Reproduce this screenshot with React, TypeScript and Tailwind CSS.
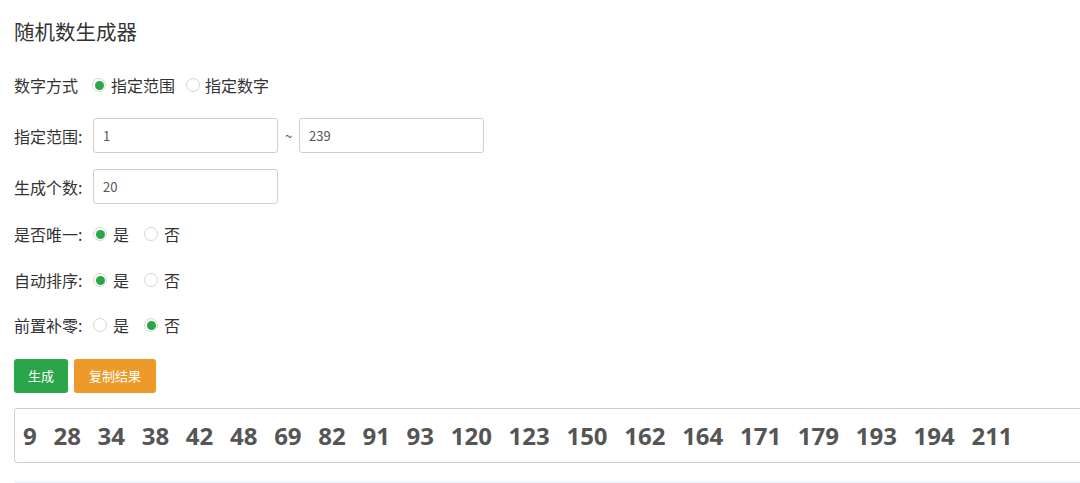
import React from 'react';

// Random number generator form

const CJK = { fontFamily: '"Microsoft YaHei", "Noto Sans CJK SC", "Noto Sans", sans-serif' };

const numbers = [9, 28, 34, 38, 42, 48, 69, 82, 91, 93, 120, 123, 150, 162, 164, 171, 179, 193, 194, 211];

function Radio({ checked, label, tight }: { checked?: boolean; label: string; tight?: boolean }) {
  return (
    <label className={tight ? 'flex items-center gap-[5px] mr-[11px]' : 'flex items-center gap-[6px] mr-[15px]'}>
      <span className="w-[14px] h-[14px] rounded-full border border-[#d6d6d6] bg-white flex items-center justify-center">
        {checked && <span className="w-[9px] h-[9px] rounded-full bg-[#2ba54a]" />}
      </span>
      <span>{label}</span>
    </label>
  );
}

function Field({ value }: { value: string }) {
  return (
    <div className="w-[185px] h-[35px] border border-[#cfcfcf] rounded-[3px] bg-white flex items-center px-[9px] text-[13px] text-[#555]">
      {value}
    </div>
  );
}

export default function App() {
  return (
    <div className="w-[1080px] h-[483px] bg-white overflow-hidden text-[#333] text-[16px]" style={CJK}>
      <div className="pl-[14px] pt-[19px]">
        <h1 className="text-[20.5px] leading-[24px] text-[#333] font-normal">随机数生成器</h1>

        <div className="flex items-center h-[24px] mt-[30px]">
          <span className="mr-[14px]">数字方式</span>
          <div className="flex items-center">
            <Radio tight checked label="指定范围" />
            <Radio tight label="指定数字" />
          </div>
        </div>

        <div className="flex items-center mt-[21px]">
          <span className="w-[79px]">指定范围:</span>
          <Field value="1" />
          <span className="w-[21px] text-center text-[13px] text-[#555]">~</span>
          <Field value="239" />
        </div>

        <div className="flex items-center mt-[16px]">
          <span className="w-[79px]">生成个数:</span>
          <Field value="20" />
        </div>

        <div className="flex items-center h-[24px] mt-[18px]">
          <span className="w-[79px]">是否唯一:</span>
          <Radio checked label="是" />
          <Radio label="否" />
        </div>

        <div className="flex items-center h-[24px] mt-[22px]">
          <span className="w-[79px]">自动排序:</span>
          <Radio checked label="是" />
          <Radio label="否" />
        </div>

        <div className="flex items-center h-[24px] mt-[21px]">
          <span className="w-[79px]">前置补零:</span>
          <Radio label="是" />
          <Radio checked label="否" />
        </div>

        <div className="flex items-center gap-[6px] mt-[22px]">
          <button className="h-[34px] w-[54px] rounded-[3px] bg-[#2ba54a] text-white text-[13px]">生成</button>
          <button className="h-[34px] w-[82px] rounded-[3px] bg-[#ee9a2a] text-white text-[13px]">复制结果</button>
        </div>

        <div className="mt-[15px] h-[55px] w-[1080px] border border-[#cfcfcf] rounded-[3px] flex items-center pl-[8px] text-[#555] font-bold text-[24px]" style={{ fontFamily: '"Open Sans", sans-serif' }}>
          {numbers.map((n) => (
            <span key={n} className="mr-[16.7px]">{n}</span>
          ))}
        </div>

        <div className="mt-[18px] h-[3px] bg-[#f2f7fc]" />
      </div>
    </div>
  );
}
